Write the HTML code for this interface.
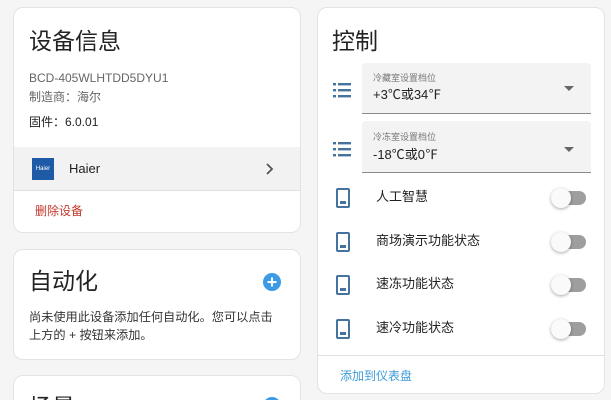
<!DOCTYPE html>
<html><head><meta charset="utf-8"><style>
*{box-sizing:border-box;margin:0;padding:0}
html,body{width:611px;height:400px;overflow:hidden}
body{background:#f5f5f5;font-family:"Liberation Sans","Noto Sans CJK SC",sans-serif;color:#212121;position:relative;line-height:1.2}
.card{position:absolute;background:#fff;border:1px solid #e3e3e3;border-radius:10px;overflow:hidden}
.abs{position:absolute;white-space:nowrap}
.h{font-size:23px;color:#222;line-height:28px}
.sel{position:absolute;left:44px;width:229px;background:#f3f3f3;border-bottom:1px solid #8a8a8a;border-radius:4px 4px 0 0}
.tog{position:absolute;left:236px;width:32px;height:14px;border-radius:7px;background:#9e9e9e}
.tog::after{content:"";position:absolute;left:-3px;top:-3px;width:20px;height:20px;border-radius:50%;background:#fafafa;box-shadow:0 1px 3px rgba(0,0,0,.35)}
</style></head><body>
<div class="card" style="left:13px;top:7px;width:288px;height:226px">
 <div class="abs h" style="left:15px;top:19px">设备信息</div>
 <div class="abs" style="left:15px;top:63px;font-size:12px;color:#666">BCD-405WLHTDD5DYU1</div>
 <div class="abs" style="left:15px;top:82px;font-size:12px;color:#666">制造商：海尔</div>
 <div class="abs" style="left:15px;top:107px;font-size:12px;color:#222">固件：6.0.01</div>
 <div class="abs" style="left:0;top:139px;width:288px;height:44px;background:#f2f2f2;border-bottom:1px solid #e0e0e0"></div>
 <div class="abs" style="left:18px;top:150px;width:22px;height:22px;background:#1f5aa6;color:#fff;font-size:6px;line-height:22px;text-align:center">Haier</div>
 <div class="abs" style="left:55px;top:153px;font-size:13px">Haier</div>
 <svg class="abs" style="left:250px;top:154px" width="12" height="14" viewBox="0 0 12 14"><path d="M3 2l5 5-5 5" fill="none" stroke="#555" stroke-width="1.8"/></svg>
 <div class="abs" style="left:21px;top:196px;font-size:12px;color:#c0392b">删除设备</div>
</div>
<div class="card" style="left:13px;top:249px;width:288px;height:111px">
 <div class="abs h" style="left:15px;top:17px">自动化</div>
 <svg class="abs" style="left:249px;top:23px" width="18" height="18"><circle cx="9" cy="9" r="9" fill="#3b9be6"/><path d="M9 4.5v9M4.5 9h9" stroke="#fff" stroke-width="2"/></svg>
 <div class="abs" style="left:15px;top:58px;font-size:12.2px;line-height:18px;color:#333;white-space:normal;width:270px">尚未使用此设备添加任何自动化。您可以点击<br>上方的 + 按钮来添加。</div>
</div>
<div class="card" style="left:13px;top:375px;width:288px;height:25px;border-bottom:none;border-radius:10px 10px 0 0">
 <div class="abs h" style="left:15px;top:17px">场景</div>
 <svg class="abs" style="left:249px;top:21px" width="18" height="18"><circle cx="9" cy="9" r="9" fill="#3b9be6"/></svg>
</div>
<div class="card" style="left:317px;top:7px;width:288px;height:387px">
 <div class="abs h" style="left:14px;top:19px">控制</div>
 <svg class="abs" style="left:15px;top:74px" width="20" height="16"><g fill="#44739e"><rect x="0" y="1" width="3" height="2.4"/><rect x="5" y="1" width="13" height="2.4"/><rect x="0" y="7" width="3" height="2.4"/><rect x="5" y="7" width="13" height="2.4"/><rect x="0" y="13" width="3" height="2.4"/><rect x="5" y="13" width="13" height="2.4"/></g></svg>
 <div class="sel" style="top:55px;height:51px"><div class="abs" style="left:11px;top:10px;font-size:9px;color:#777">冷藏室设置档位</div><div class="abs" style="left:11px;top:24px;font-size:13px">+3℃或34℉</div><div class="abs" style="left:202px;top:23px;border:5px solid transparent;border-top-color:#666"></div></div>
 <svg class="abs" style="left:15px;top:133px" width="20" height="16"><g fill="#44739e"><rect x="0" y="1" width="3" height="2.4"/><rect x="5" y="1" width="13" height="2.4"/><rect x="0" y="7" width="3" height="2.4"/><rect x="5" y="7" width="13" height="2.4"/><rect x="0" y="13" width="3" height="2.4"/><rect x="5" y="13" width="13" height="2.4"/></g></svg>
 <div class="sel" style="top:113px;height:52px"><div class="abs" style="left:11px;top:11px;font-size:9px;color:#777">冷冻室设置档位</div><div class="abs" style="left:11px;top:26px;font-size:13px">-18℃或0℉</div><div class="abs" style="left:202px;top:26px;border:5px solid transparent;border-top-color:#666"></div></div>
 <div class="abs" style="left:18px;top:180px;width:14px;height:20px;border:2px solid #44739e;border-radius:2px"><div style="position:absolute;left:2px;bottom:2px;width:6px;height:3px;background:#44739e"></div></div>
 <div class="abs" style="left:58px;top:181px;font-size:13px">人工智慧</div><div class="tog" style="top:183px"></div>
 <div class="abs" style="left:18px;top:224px;width:14px;height:20px;border:2px solid #44739e;border-radius:2px"><div style="position:absolute;left:2px;bottom:2px;width:6px;height:3px;background:#44739e"></div></div>
 <div class="abs" style="left:58px;top:225px;font-size:13px">商场演示功能状态</div><div class="tog" style="top:227px"></div>
 <div class="abs" style="left:18px;top:267px;width:14px;height:20px;border:2px solid #44739e;border-radius:2px"><div style="position:absolute;left:2px;bottom:2px;width:6px;height:3px;background:#44739e"></div></div>
 <div class="abs" style="left:58px;top:268px;font-size:13px">速冻功能状态</div><div class="tog" style="top:270px"></div>
 <div class="abs" style="left:18px;top:311px;width:14px;height:20px;border:2px solid #44739e;border-radius:2px"><div style="position:absolute;left:2px;bottom:2px;width:6px;height:3px;background:#44739e"></div></div>
 <div class="abs" style="left:58px;top:312px;font-size:13px">速冷功能状态</div><div class="tog" style="top:314px"></div>
 <div class="abs" style="left:0;top:347px;width:288px;border-top:1px solid #e0e0e0"></div>
 <div class="abs" style="left:22px;top:361px;font-size:12px;color:#3d9ad9">添加到仪表盘</div>
</div>
</body></html>
